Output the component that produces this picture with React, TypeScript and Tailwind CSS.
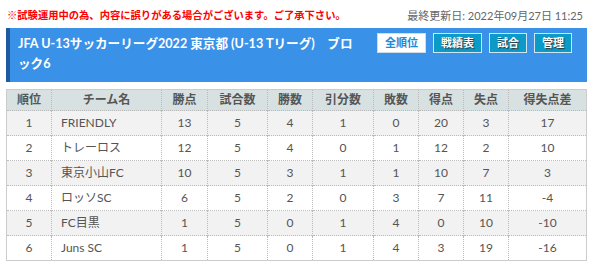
import React from "react";

const rows = [
  ["1", "FRIENDLY", "13", "5", "4", "1", "0", "20", "3", "17"],
  ["2", "トレーロス", "12", "5", "4", "0", "1", "12", "2", "10"],
  ["3", "東京小山FC", "10", "5", "3", "1", "1", "10", "7", "3"],
  ["4", "ロッソSC", "6", "5", "2", "0", "3", "7", "11", "-4"],
  ["5", "FC目黒", "1", "5", "0", "1", "4", "0", "10", "-10"],
  ["6", "Juns SC", "1", "5", "0", "1", "4", "3", "19", "-16"],
];

const heads = ["順位", "チーム名", "勝点", "試合数", "勝数", "引分数", "敗数", "得点", "失点", "得失点差"];
const widths = ["w-[45px]", "w-[110px]", "w-[46px]", "w-[60px]", "w-[45px]", "w-[61px]", "w-[45px]", "w-[45px]", "w-[45px]", "w-[78px]"];

export default function App() {
  return (
    <div
      className="w-[596px] h-[267px] bg-white px-[6px] pt-[8px]"
      style={{ fontFamily: '"Lato", "Noto Sans CJK JP", sans-serif' }}
    >
      <div className="flex justify-between items-center h-[16px] w-[581px] whitespace-nowrap">
        <span className="text-[#ff0000] font-bold pl-[1px] text-[10.3px]">※試験運用中の為、内容に誤りがある場合がございます。ご了承下さい。</span>
        <span className="text-[#666] pr-[4px] text-[11px]">最終更新日: 2022年09月27日 11:25</span>
      </div>
      <div className="mt-[4px] w-[581px] h-[54px] bg-[#3a91e8] border-l-[4px] border-[#1d5aa0] flex pl-[8px] pr-[15px]">
        <div className="w-[337px] text-white font-bold text-[12.6px] leading-[20px] pt-[6px]">
          JFA U-13サッカーリーグ2022 東京都 (U-13 Tリーグ)　ブロック6
        </div>
        <div className="flex-1" />
        <div className="flex gap-[7px] pt-[5px] items-start shrink-0">
          <div className="w-[49px] h-[20px] bg-white border border-[#d0dde8] text-[#1a8cd8] font-bold text-[11px] flex items-center justify-center">全順位</div>
          <div className="w-[49px] h-[20px] bg-[#0c9ac8] border border-[#cfe6f2] text-white font-bold text-[11px] flex items-center justify-center [text-shadow:1px_1px_1px_#333]">戦績表</div>
          <div className="w-[38px] h-[20px] bg-[#0c9ac8] border border-[#cfe6f2] text-white font-bold text-[11px] flex items-center justify-center [text-shadow:1px_1px_1px_#333]">試合</div>
          <div className="w-[38px] h-[20px] bg-[#0c9ac8] border border-[#cfe6f2] text-white font-bold text-[11px] flex items-center justify-center [text-shadow:1px_1px_1px_#333]">管理</div>
        </div>
      </div>
      <table className="mt-[7px] border-collapse border border-[#cccccc] text-[12px] text-[#555] w-[581px] table-fixed">
        <thead>
          <tr className="bg-[#d7e1e1] h-[21px]">
            {heads.map((h, i) => (
              <th key={i} className={`${widths[i]} font-bold text-[#555] border-r border-dotted border-[#bbb] p-0 text-center`}>
                {h}
              </th>
            ))}
          </tr>
        </thead>
        <tbody>
          {rows.map((r, ri) => (
            <tr key={ri} className={`${ri % 2 === 0 ? "bg-[#f2f2f2]" : "bg-white"} h-[25px] border-t border-dotted border-[#bbb]`}>
              {r.map((c, ci) => (
                <td
                  key={ci}
                  className={`p-0 border-r border-dotted border-[#bbb] ${ci === 1 ? "text-left pl-[9px]" : "text-center"}`}
                >
                  {c}
                </td>
              ))}
            </tr>
          ))}
        </tbody>
      </table>
    </div>
  );
}
